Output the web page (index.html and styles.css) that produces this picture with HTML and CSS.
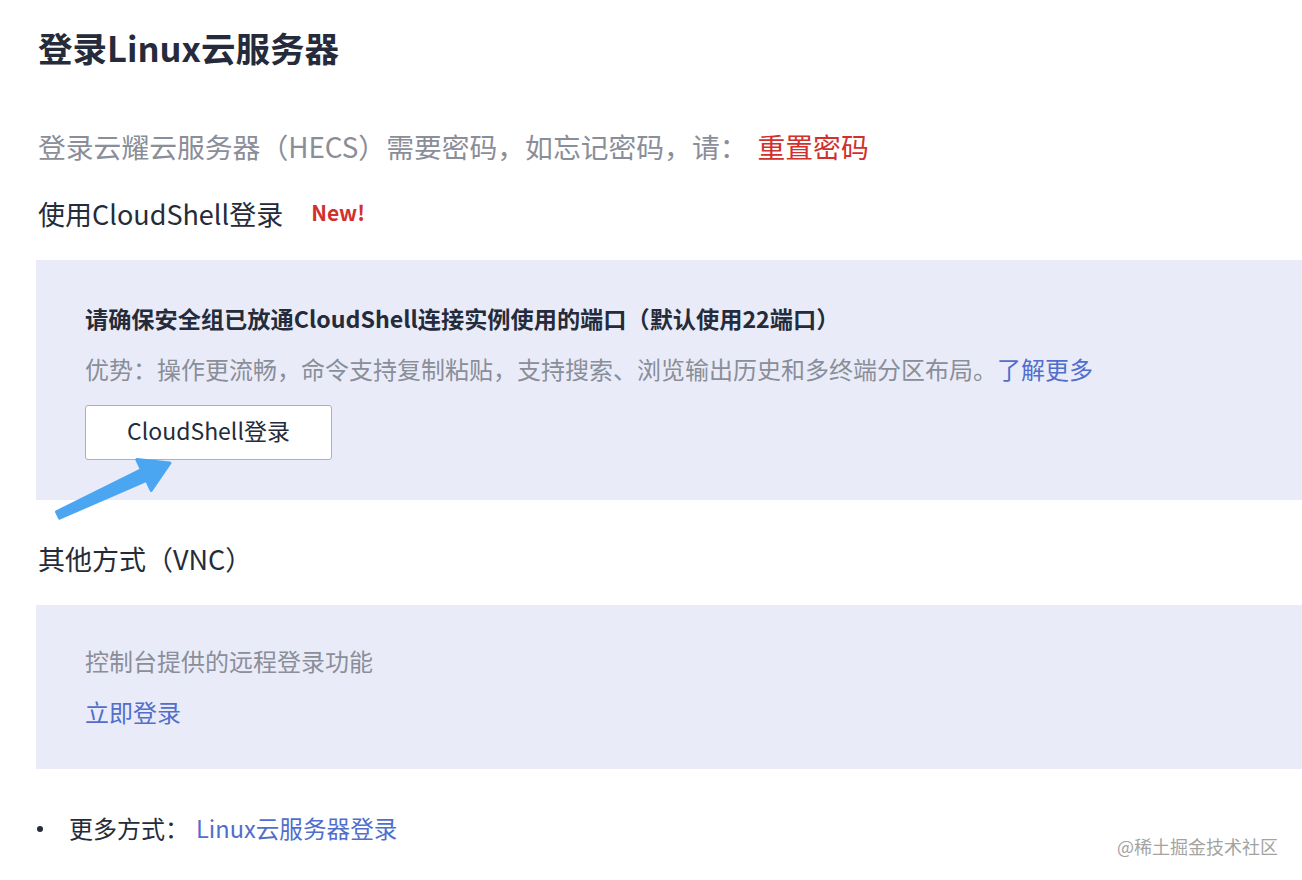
FILE: index.html
```html
<!DOCTYPE html>
<html lang="zh-CN">
<head>
<meta charset="utf-8">
<title>登录Linux云服务器</title>
<link rel="stylesheet" href="styles.css">
</head>
<body>
<div class="page">
  <h1 class="title">登录Linux云服务器</h1>
  <p class="intro">登录云耀云服务器（HECS）需要密码，如忘记密码，请：<a class="reset" href="#">重置密码</a></p>
  <div class="section-head">使用CloudShell登录<span class="new">New!</span></div>
  <div class="panel">
    <div class="panel-strong">请确保安全组已放通CloudShell连接实例使用的端口（默认使用22端口）</div>
    <div class="panel-text">优势：操作更流畅，命令支持复制粘贴，支持搜索、浏览输出历史和多终端分区布局。<a class="link" href="#">了解更多</a></div>
    <button class="btn">CloudShell登录</button>
  </div>
  <div class="section-head vnc">其他方式（VNC）</div>
  <div class="panel">
    <div class="panel-text first">控制台提供的远程登录功能</div>
    <div class="panel-link"><a class="link" href="#">立即登录</a></div>
  </div>
  <ul class="more">
    <li><span class="dot"></span>更多方式：<a class="link more-link" href="#">Linux云服务器登录</a></li>
  </ul>
  <svg class="arrow" width="130" height="80" viewBox="0 0 130 80" aria-hidden="true">
    <path d="M6.5 61.8 L91.5 19.6 L86.8 9.6 L120 13 L101.2 40.4 L96.5 30.4 L9.5 68.2 Z" fill="#4ba6f2" stroke="#4ba6f2" stroke-width="3" stroke-linejoin="round"/>
  </svg>
  <div class="watermark">@稀土掘金技术社区</div>
</div>
</body>
</html>
```
FILE: styles.css
```css
html, body {
  margin: 0;
  padding: 0;
  background: #ffffff;
}
body {
  font-family: "Noto Sans CJK SC", "Noto Sans", sans-serif;
  color: #252b3a;
}
.page {
  position: relative;
  width: 1302px;
  height: 880px;
  padding-left: 36px;
  box-sizing: border-box;
  overflow: hidden;
}
.title {
  margin: 23px 0 0 2px;
  font-size: 34.5px;
  line-height: 48px;
  font-weight: 700;
  color: #252b3a;
}
.intro {
  margin: 55px 0 0 2px;
  font-size: 27.8px;
  line-height: 40px;
  color: #8a8e99;
}
.reset {
  color: #d0312d;
  text-decoration: none;
  margin-left: 10px;
}
.section-head {
  margin: 27px 0 0 2px;
  font-size: 27px;
  line-height: 40px;
  color: #252b3a;
  display: flex;
  align-items: flex-start;
}
.intro + .section-head {
  margin-top: 28px;
}
.new {
  margin-left: 28px;
  font-size: 21px;
  font-weight: 700;
  line-height: 36px;
  color: #d0312d;
}
.panel {
  margin-top: 25px;
  background: #e9ecf8;
  padding: 41px 0 40px 49px;
  display: flex;
  flex-direction: column;
  align-items: flex-start;
}
.section-head + .panel {
  margin-top: 26px;
}
.panel-strong {
  font-size: 23.2px;
  line-height: 34px;
  font-weight: 700;
  color: #252b3a;
}
.panel-text {
  margin-top: 17px;
  font-size: 24px;
  line-height: 34px;
  color: #8a8e99;
}
.panel-text.first {
  margin-top: -1px;
}
.panel-link {
  margin-top: 17px;
  font-size: 24px;
  line-height: 34px;
}
.link {
  color: #526ecc;
  text-decoration: none;
}
.btn {
  margin-top: 19px;
  width: 247px;
  height: 55px;
  background: #ffffff;
  border: 1.5px solid #adb0b8;
  border-radius: 3px;
  font-family: "Noto Sans CJK SC", "Noto Sans", sans-serif;
  font-size: 23px;
  line-height: 30px;
  color: #252b3a;
  padding: 0 0 6px 0;
}
.vnc {
  margin-top: 39px;
}
.vnc + .panel {
  margin-top: 26px;
  padding-top: 40px;
}
.more {
  list-style: none;
  margin: 42px 0 0 0;
  padding: 0;
}
.more li {
  display: flex;
  align-items: center;
  font-size: 24px;
  line-height: 34px;
  color: #252b3a;
}
.dot {
  width: 6px;
  height: 6px;
  border-radius: 50%;
  background: #252b3a;
  margin: 2px 26px 0 1px;
}
.more-link {
  margin-left: 7px;
  font-size: 23.6px;
}
.arrow {
  position: absolute;
  left: 50px;
  top: 450px;
}
.watermark {
  position: absolute;
  left: 1117px;
  top: 834px;
  font-size: 18px;
  line-height: 24px;
  color: #a3a3a3;
}
```
